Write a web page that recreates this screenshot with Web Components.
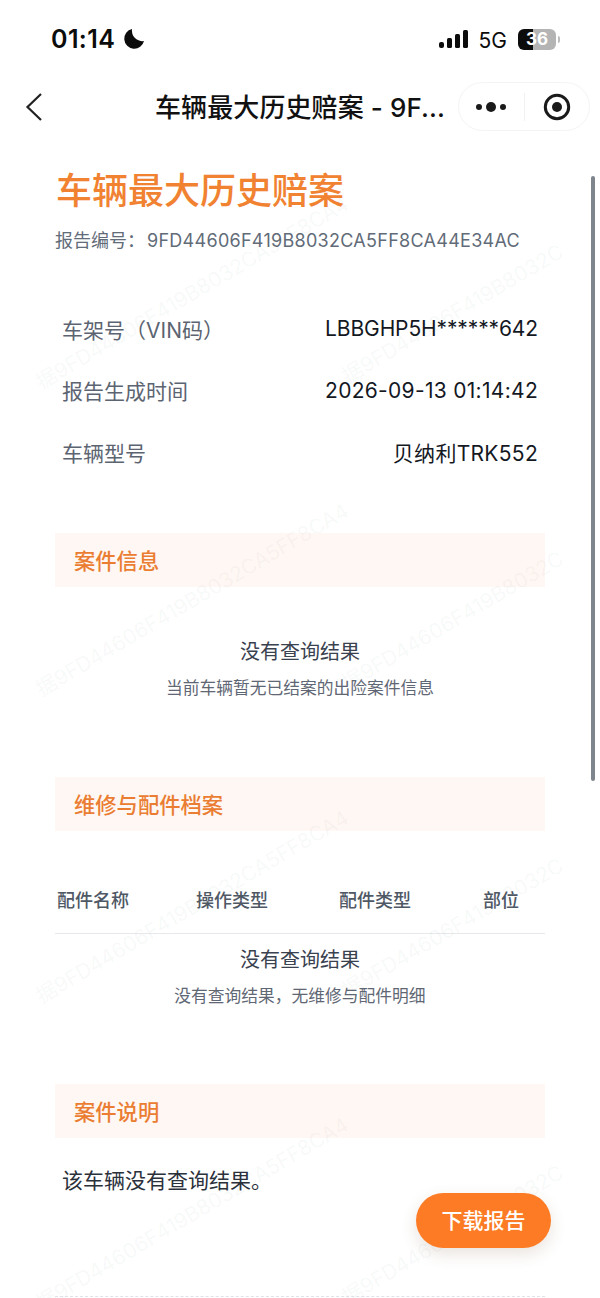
<!DOCTYPE html>
<html lang="zh">
<head>
<meta charset="utf-8">
<title>车辆最大历史赔案</title>
<style>
  html, body { margin: 0; padding: 0; background: #fff; }
  body {
    width: 600px;
    height: 1298px;
    overflow: hidden;
    position: relative;
    font-family: Inter, "Noto Sans CJK SC", sans-serif;
  }
</style>
</head>
<body>
  <status-bar></status-bar>
  <nav-bar>车辆最大历史赔案 - 9F...</nav-bar>
  <report-page>
    <report-head slot="head" code="9FD44606F419B8032CA5FF8CA44E34AC">车辆最大历史赔案</report-head>
    <info-row label="车架号（VIN码）" style="--v-space:-.12px">LBBGHP5H******642</info-row>
    <info-row label="报告生成时间">2026-09-13 01:14:42</info-row>
    <info-row label="车辆型号">贝纳利TRK552</info-row>

    <section-head style="margin-top:50.5px">案件信息</section-head>
    <empty-state style="margin-top:50px" note="当前车辆暂无已结案的出险案件信息">没有查询结果</empty-state>

    <section-head style="margin-top:76px">维修与配件档案</section-head>
    <parts-table style="margin-top:53px"></parts-table>
    <empty-state style="margin-top:11px" note="没有查询结果，无维修与配件明细">没有查询结果</empty-state>

    <section-head style="margin-top:75px">案件说明</section-head>
    <note-text style="margin-top:26px">该车辆没有查询结果。</note-text>
  </report-page>
  <water-mark></water-mark>
  <scroll-thumb></scroll-thumb>
  <fab-button>下载报告</fab-button>
  <dash-line></dash-line>

<script>
class StatusBar extends HTMLElement {
  constructor() {
    super();
    this.attachShadow({ mode: "open" }).innerHTML = `
      <style>
        :host { display: flex; align-items: center; justify-content: space-between; height: 78px; box-sizing: border-box; padding: 0 40px 0 51px; color: #0c0c0c; }
        .left, .right { display: flex; align-items: center; }
        .time { font-size: 25px; font-weight: 600; letter-spacing: .4px; }
        .moon { margin-left: 8px; }
        .net { font-size: 21px; font-weight: 400; margin: 2px 11px 0 10px; }
        .batt { position: relative; width: 38px; height: 21px; border-radius: 6px; background: linear-gradient(90deg, #0c0c0c 0 15px, #b4b4b4 15px); color: #fff; font-size: 17px; font-weight: 700; text-align: center; line-height: 21px; }
        .tip { width: 2px; height: 7px; border-radius: 0 2px 2px 0; background: #bdbdbd; margin-left: 2px; }
      </style>
      <div class="left">
        <span class="time">01:14</span>
        <svg class="moon" width="22" height="22" viewBox="0 0 22 22"><path d="M9 1A10 10 0 1 0 21 13 10.5 10.5 0 0 1 9 1Z" fill="#0c0c0c"/></svg>
      </div>
      <div class="right">
        <svg width="30" height="20" viewBox="0 0 30 20" fill="#0c0c0c">
          <rect x="0" y="13" width="5" height="6" rx="2"/><rect x="8" y="9" width="5" height="10" rx="1.5"/><rect x="16" y="5" width="5" height="14" rx="1.5"/><rect x="24" y="1" width="5" height="18" rx="1.5"/>
        </svg>
        <span class="net">5G</span>
        <span class="batt">36</span><span class="tip"></span>
      </div>`;
  }
}

class NavBar extends HTMLElement {
  constructor() {
    super();
    this.attachShadow({ mode: "open" }).innerHTML = `
      <style>
        :host { display: flex; align-items: center; height: 57px; box-sizing: border-box; padding: 0 10px 0 24px; color: #111; }
        .back { flex: none; }
        .title { flex: 1; text-align: center; font-size: 26px; font-weight: 500; white-space: nowrap; padding: 0 0 2px 98px; letter-spacing: .1px; }
        .capsule { flex: none; display: flex; align-items: center; width: 132px; height: 49px; box-sizing: border-box; border: 1px solid #f4f4f4; border-radius: 25px; background: #fff; }
        .capsule > div { flex: 1; display: flex; align-items: center; justify-content: center; height: 28px; }
        .capsule > div + div { border-left: 1px solid #f1f1f1; }
      </style>
      <svg class="back" width="20" height="30" viewBox="0 0 20 30"><path d="M17 2 3.5 15 17 28" fill="none" stroke="#222" stroke-width="2.2"/></svg>
      <span class="title"><slot></slot></span>
      <div class="capsule">
        <div><svg width="32" height="12" viewBox="0 0 32 12" fill="#1a1a1a"><circle cx="4" cy="6" r="3"/><circle cx="16" cy="6" r="5"/><circle cx="28" cy="6" r="3"/></svg></div>
        <div><svg width="28" height="28" viewBox="0 0 28 28"><circle cx="14" cy="14" r="11.7" fill="none" stroke="#1a1a1a" stroke-width="3"/><circle cx="14" cy="14" r="5" fill="#1a1a1a"/></svg></div>
      </div>`;
  }
}

class ReportPage extends HTMLElement {
  constructor() {
    super();
    this.attachShadow({ mode: "open" }).innerHTML = `
      <style>
        :host { display: block; box-sizing: border-box; padding: 29px 55px 0; }
        .rows { display: flex; flex-direction: column; }
      </style>
      <slot name="head"></slot>
      <div class="rows"><slot></slot></div>`;
  }
}

class ReportHead extends HTMLElement {
  constructor() {
    super();
    this.attachShadow({ mode: "open" }).innerHTML = `
      <style>
        :host { display: block; margin-bottom: 43px; }
        h1 { margin: 0 0 0 1px; font-size: 36px; line-height: 54px; font-weight: 500; color: #f08232; }
        p { margin: 9px 0 0; display: flex; font-size: 18px; line-height: 28px; color: #626b78; }
        .k { width: 92px; }
        .c { letter-spacing: .28px; }
      </style>
      <h1><slot></slot></h1>
      <p><span class="k">报告编号：</span><span class="c"></span></p>`;
    this.shadowRoot.querySelector(".c").textContent = this.getAttribute("code");
  }
}

class InfoRow extends HTMLElement {
  constructor() {
    super();
    this.attachShadow({ mode: "open" }).innerHTML = `
      <style>
        :host { display: flex; justify-content: space-between; align-items: center; height: 61.5px; padding: 0 7px; font-size: 21px; }
        .k { color: #5c6471; }
        .v { color: #14181f; white-space: nowrap; letter-spacing: var(--v-space, .3px); }
      </style>
      <span class="k"></span><span class="v"><slot></slot></span>`;
    this.shadowRoot.querySelector(".k").textContent = this.getAttribute("label");
  }
}

class SectionHead extends HTMLElement {
  constructor() {
    super();
    this.attachShadow({ mode: "open" }).innerHTML = `
      <style>
        :host { display: flex; align-items: center; box-sizing: border-box; height: 54px; padding: 0 0 2px 19px; background: #fff7f3; color: #ea7d32; font-size: 21.3px; font-weight: 500; }
      </style>
      <slot></slot>`;
  }
}

class EmptyState extends HTMLElement {
  constructor() {
    super();
    this.attachShadow({ mode: "open" }).innerHTML = `
      <style>
        :host { display: block; text-align: center; }
        .t { font-size: 20px; line-height: 30px; font-weight: 400; color: #3a4250; }
        .n { margin-top: 9px; font-size: 16.75px; line-height: 25px; color: #5f6774; }
      </style>
      <div class="t"><slot></slot></div>
      <div class="n"></div>`;
    this.shadowRoot.querySelector(".n").textContent = this.getAttribute("note");
  }
}

class PartsTable extends HTMLElement {
  constructor() {
    super();
    this.attachShadow({ mode: "open" }).innerHTML = `
      <style>
        :host { display: grid; grid-template-columns: 139px 143px 144px 1fr; box-sizing: border-box; height: 50px; padding: 0 2px; border-bottom: 1.5px solid #e6e8eb; font-size: 18px; font-weight: 500; line-height: 34px; color: #4f5865; }
      </style>
      <span>配件名称</span><span>操作类型</span><span>配件类型</span><span>部位</span>`;
  }
}

class NoteText extends HTMLElement {
  constructor() {
    super();
    this.attachShadow({ mode: "open" }).innerHTML = `
      <style>
        :host { display: block; padding-left: 7px; font-size: 21px; line-height: 34px; color: #2b313b; }
      </style>
      <slot></slot>`;
  }
}

// repeated diagonal text lying over the whole report
class WaterMark extends HTMLElement {
  constructor() {
    super();
    const left = "据9FD44606F419B8032CA5FF8CA4";
    const right = "据9FD44606F419B8032C";
    let tiles = "";
    for (let i = 0; i < 4; i++) {
      tiles += `<div class="tile"><span>${left}</span></div><div class="tile r"><span>${right}</span></div>`;
    }
    this.attachShadow({ mode: "open" }).innerHTML = `
      <style>
        :host { position: absolute; left: 30px; top: 132px; width: 570px; height: 1166px; display: block; pointer-events: none; }
        .grid { display: grid; grid-template-columns: 310px 260px; grid-auto-rows: 307px; }
        .tile { position: relative; }
        span { position: absolute; left: 8px; top: 241px; line-height: 22px; white-space: nowrap; font-size: 20.7px; color: rgba(60, 70, 85, .05); transform: rotate(-30.5deg); transform-origin: 0 50%; }
        .r span { left: 4px; top: 235px; }
      </style>
      <div class="grid">${tiles}</div>`;
  }
}

class ScrollThumb extends HTMLElement {
  constructor() {
    super();
    this.attachShadow({ mode: "open" }).innerHTML = `
      <style>
        :host { position: absolute; left: 591px; top: 176px; width: 4px; height: 605px; border-radius: 2px; background: #7f858c; }
      </style>`;
  }
}

class FabButton extends HTMLElement {
  constructor() {
    super();
    this.attachShadow({ mode: "open" }).innerHTML = `
      <style>
        :host { position: absolute; left: 416px; top: 1193px; width: 135px; height: 55px; box-sizing: border-box; padding-bottom: 3px; display: flex; align-items: center; justify-content: center; border-radius: 28px; background: #fd7b25; color: #fff; font-size: 21px; font-weight: 500; box-shadow: 0 6px 16px rgba(120, 80, 50, .16); }
      </style>
      <slot></slot>`;
  }
}

class DashLine extends HTMLElement {
  constructor() {
    super();
    this.attachShadow({ mode: "open" }).innerHTML = `
      <style>
        :host { position: absolute; left: 55px; top: 1296px; width: 490px; height: 0; border-top: 1.5px dashed #dfe2e6; }
      </style>`;
  }
}

customElements.define("status-bar", StatusBar);
customElements.define("nav-bar", NavBar);
customElements.define("report-page", ReportPage);
customElements.define("report-head", ReportHead);
customElements.define("info-row", InfoRow);
customElements.define("section-head", SectionHead);
customElements.define("empty-state", EmptyState);
customElements.define("parts-table", PartsTable);
customElements.define("note-text", NoteText);
customElements.define("water-mark", WaterMark);
customElements.define("scroll-thumb", ScrollThumb);
customElements.define("fab-button", FabButton);
customElements.define("dash-line", DashLine);
</script>
</body>
</html>
